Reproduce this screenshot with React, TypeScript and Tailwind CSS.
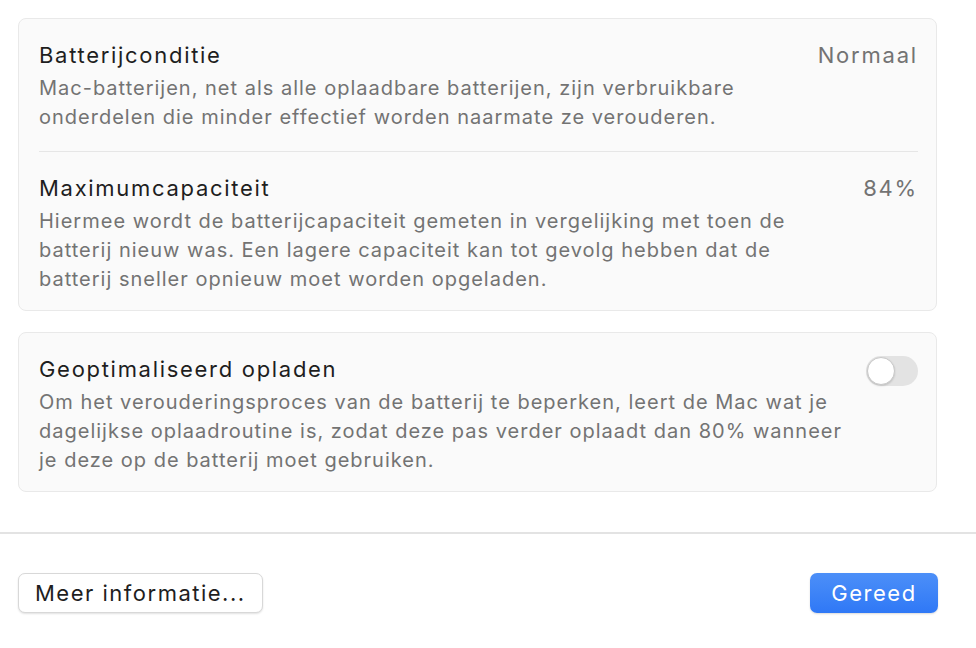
import React from "react";

type Row = {
  title: string;
  value?: string;
  body: string[];
};

const healthRows: Row[] = [
  {
    title: "Batterijconditie",
    value: "Normaal",
    body: [
      "Mac-batterijen, net als alle oplaadbare batterijen, zijn verbruikbare",
      "onderdelen die minder effectief worden naarmate ze verouderen.",
    ],
  },
  {
    title: "Maximumcapaciteit",
    value: "84%",
    body: [
      "Hiermee wordt de batterijcapaciteit gemeten in vergelijking met toen de",
      "batterij nieuw was. Een lagere capaciteit kan tot gevolg hebben dat de",
      "batterij sneller opnieuw moet worden opgeladen.",
    ],
  },
];

function SettingRow({ row, right }: { row: Row; right?: React.ReactNode }) {
  return (
    <div className="flex justify-between">
      <div className="flex flex-col">
        <div className="text-[22px] leading-[30px] tracking-[1.7px] text-[#1e1e1e]">{row.title}</div>
        <p className="mt-[4px] text-[20px] leading-[29px] tracking-[1px] text-[#737373]">
          {row.body.map((line, i) => (
            <span key={i} className="block whitespace-nowrap">
              {line}
            </span>
          ))}
        </p>
      </div>
      {right ?? (
        <div className="text-[22px] leading-[30px] tracking-[1.8px] text-[#737373]">{row.value}</div>
      )}
    </div>
  );
}

function Toggle() {
  return (
    <div className="mt-[2px] flex h-[30px] w-[52px] shrink-0 items-center rounded-full bg-[#e3e3e3] p-[1px]">
      <div className="h-[28px] w-[28px] rounded-full border border-[#c8c8c8] bg-white shadow-[0_1px_2px_rgba(0,0,0,0.15)]" />
    </div>
  );
}

export default function App() {
  return (
    <div
      className="flex h-[648px] w-[976px] flex-col bg-white"
      style={{ fontFamily: "Inter, 'Open Sans', sans-serif" }}
    >
      <div className="flex flex-col gap-[21px] pl-[18px] pr-[39px] pt-[18px]">
        {/* Health card */}
        <section className="rounded-[8px] border border-[#e9e9e9] bg-[#fafafa] pl-[20px] pr-[18px] pt-[21px] pb-[16px]">
          <SettingRow row={healthRows[0]} />
          <div className="mt-[19px] mb-[21px] h-px bg-[#e6e6e6]" />
          <SettingRow row={healthRows[1]} />
        </section>

        {/* Optimised charging card */}
        <section className="rounded-[8px] border border-[#e9e9e9] bg-[#fafafa] pl-[20px] pr-[18px] pt-[21px] pb-[16px]">
          <SettingRow
            row={{
              title: "Geoptimaliseerd opladen",
              body: [
                "Om het verouderingsproces van de batterij te beperken, leert de Mac wat je",
                "dagelijkse oplaadroutine is, zodat deze pas verder oplaadt dan 80% wanneer",
                "je deze op de batterij moet gebruiken.",
              ],
            }}
            right={<Toggle />}
          />
        </section>
      </div>

      <div className="mt-[40px] h-[2px] bg-[#e3e3e3]" />

      <div className="flex items-center justify-between pl-[18px] pr-[38px] pt-[39px]">
        <button className="h-[40px] rounded-[7px] border border-[#d8d8d8] bg-white px-[16px] text-[22px] tracking-[1.5px] text-[#1e1e1e] shadow-[0_1px_2px_rgba(0,0,0,0.12)]">
          Meer informatie...
        </button>
        <button className="h-[40px] w-[128px] rounded-[7px] bg-gradient-to-b from-[#4c8ff8] to-[#2f78f6] text-[22px] tracking-[1.5px] text-white shadow-[0_1px_2px_rgba(0,0,0,0.15)]">
          Gereed
        </button>
      </div>
    </div>
  );
}
